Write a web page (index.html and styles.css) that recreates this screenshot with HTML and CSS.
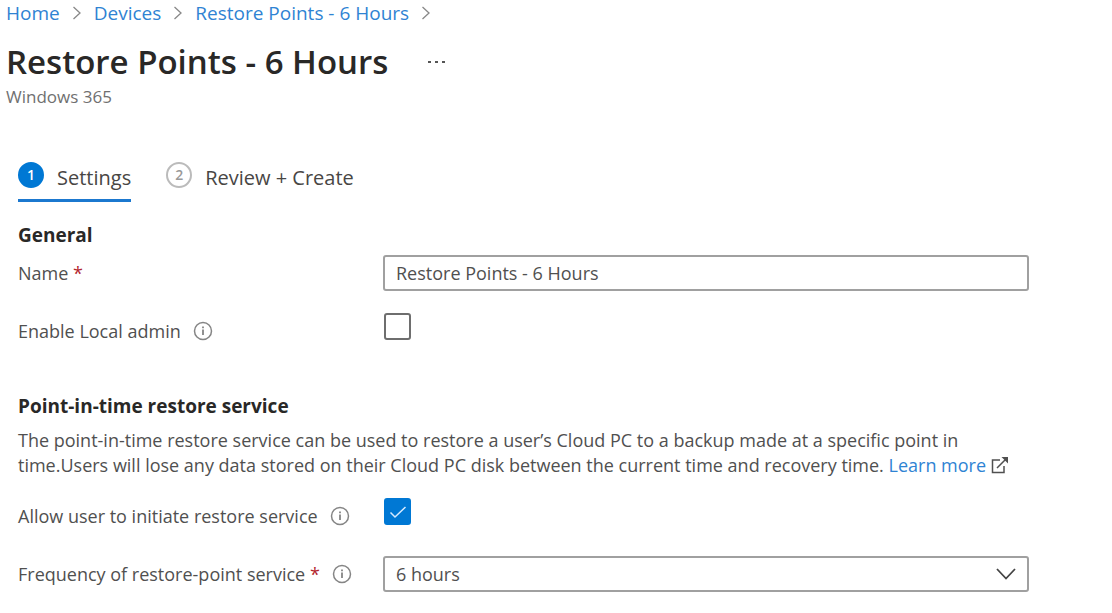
FILE: index.html
```html
<!DOCTYPE html>
<html lang="en">
<head>
<meta charset="utf-8">
<title>Restore Points - 6 Hours</title>
<link rel="stylesheet" href="styles.css">
</head>
<body>
<svg class="defs" aria-hidden="true">
  <symbol id="chevron" viewBox="0 0 10 16"><path d="M1.500 2l6.500 6-6.500 6" fill="none" stroke="currentColor" stroke-width="1.300"/></symbol>
  <symbol id="info" viewBox="0 0 20 20"><circle cx="10" cy="10" r="8.500" fill="none" stroke="currentColor" stroke-width="1.500"/><path d="M10 8.500v5.500M10 5.500v1.700" fill="none" stroke="currentColor" stroke-width="1.800"/></symbol>
</svg>
<header class="page-header">
  <nav class="breadcrumb" aria-label="Breadcrumb">
    <a class="link" href="#">Home</a>
    <svg class="crumb-sep"><use href="#chevron"/></svg>
    <a class="link" href="#">Devices</a>
    <svg class="crumb-sep"><use href="#chevron"/></svg>
    <a class="link" href="#">Restore Points - 6 Hours</a>
    <svg class="crumb-sep"><use href="#chevron"/></svg>
  </nav>
  <div class="title-row">
    <h1 class="title">Restore Points - 6 Hours</h1>
    <button class="more" type="button" aria-label="More actions"><svg class="more-icon" viewBox="0 0 18 4"><path d="M0 1h3v2H0zM7 1h3v2H7zM14 1h3v2h-3z" fill="currentColor"/></svg></button>
  </div>
  <p class="subtitle">Windows 365</p>
</header>
<main class="content">
  <div class="tabs" role="tablist">
    <button class="tab tab-active" type="button" role="tab" aria-selected="true"><span class="step step-active">1</span><span class="tab-text">Settings</span></button>
    <button class="tab" type="button" role="tab" aria-selected="false"><span class="step">2</span><span class="tab-text">Review + Create</span></button>
  </div>
  <form>
    <section class="section">
      <h2 class="heading">General</h2>
      <div class="fields">
        <div class="field">
          <div class="label-cell"><label for="name">Name <span class="required">*</span></label></div>
          <input class="control" id="name" type="text" value="Restore Points - 6 Hours">
        </div>
        <div class="field">
          <div class="label-cell"><label for="admin">Enable Local admin</label><svg class="info"><use href="#info"/></svg></div>
          <span class="check"><input class="box" id="admin" type="checkbox"></span>
        </div>
      </div>
    </section>
    <section class="section">
      <h2 class="heading">Point-in-time restore service</h2>
      <p class="description">The point-in-time restore service can be used to restore a user’s Cloud PC to a backup made at a specific point in time.Users will lose any data stored on their Cloud PC disk between the current time and recovery time. <a class="link" href="#">Learn more</a> <svg class="external" viewBox="0 0 18 18"><path d="M9 4H1.500v12.500H13V10M6 12l9.500-9.500" fill="none" stroke="currentColor" stroke-width="1.500"/><path d="M10.500 1H17v6.500z" fill="currentColor"/></svg></p>
      <div class="fields">
        <div class="field">
          <div class="label-cell"><label for="allow">Allow user to initiate restore service</label><svg class="info"><use href="#info"/></svg></div>
          <span class="check"><input class="box" id="allow" type="checkbox" checked><svg class="tick" viewBox="0 0 18 14"><path d="M1.500 7.500l4.500 4.500L16.500 2" fill="none" stroke="currentColor" stroke-width="1.500"/></svg></span>
        </div>
        <div class="field">
          <div class="label-cell"><label for="frequency">Frequency of restore-point service <span class="required">*</span></label><svg class="info"><use href="#info"/></svg></div>
          <div class="select-wrap">
            <select class="control" id="frequency"><option>6 hours</option></select>
            <svg class="arrow" viewBox="0 0 20 12"><path d="M1 1l9 9.500L19 1" fill="none" stroke="currentColor" stroke-width="1.800"/></svg>
          </div>
        </div>
      </div>
    </section>
  </form>
</main>
</body>
</html>
```
FILE: styles.css
```css
* { box-sizing: border-box; }
body {
  margin: 0;
  background: #fff;
  color: #505050;
  font: 18px/25px "Open Sans", "Noto Sans", sans-serif;
}
h1, h2, p { margin: 0; }
button, input, select { font: inherit; color: inherit; }
button { border: 0; padding: 0; background: none; }
.defs { display: none; }
.link { color: #2f83d3; text-decoration: none; }
.page-header { padding: 0 6px; }
.breadcrumb { display: flex; align-items: center; gap: 12px; height: 26px; font-size: 19px; }
.crumb-sep { width: 10px; height: 16px; color: #888; }
.title-row { display: flex; align-items: center; gap: 40px; margin-top: 14px; }
.title { font-size: 33px; line-height: 44px; font-weight: 600; color: #292827; }
.more { display: flex; color: #555; }
.more-icon { width: 18px; height: 4px; }
.subtitle { font-size: 17px; line-height: 26px; color: #707070; }
.content { padding: 50px 83px 20px 18px; }
.tabs { display: flex; gap: 35px; }
.tab { display: flex; gap: 13px; height: 42px; font-size: 20px; line-height: 36px; color: #484644; }
.tab-active { border-bottom: 3px solid #1b78cf; }
.step {
  width: 26px;
  height: 26px;
  margin-top: 2px;
  border: 2px solid #bbb;
  border-radius: 50%;
  font-size: 14px;
  line-height: 22px;
  font-weight: 600;
  color: #999;
}
.step-active { border-color: #0078d4; background: #0078d4; color: #fff; }
.section { padding-top: 20px; margin-bottom: 24px; }
.heading { font-size: 19px; line-height: 27px; font-weight: 700; color: #292827; }
.fields { display: grid; gap: 22px; padding-top: 6px; }
.field { display: grid; grid-template-columns: 365px 1fr; min-height: 36px; }
.label-cell { display: flex; align-items: center; gap: 12px; }
.required { color: #b3262d; }
.info { width: 20px; height: 20px; color: #858585; }
.control {
  width: 100%;
  height: 36px;
  padding: 0 11px;
  border: 2px solid #a0a0a0;
  border-radius: 3px;
  background: #fff;
  appearance: none;
}
.check { display: grid; justify-content: start; align-content: start; padding-left: 1px; }
.box {
  grid-area: 1 / 1;
  width: 27px;
  height: 27px;
  margin: 0;
  border: 2px solid #6e6e6e;
  border-radius: 3px;
  appearance: none;
}
.box:checked { border-color: #0078d4; background: #0078d4; }
.tick { grid-area: 1 / 1; place-self: center; width: 18px; height: 14px; color: #d5eaff; pointer-events: none; }
.description { margin-top: 8px; margin-bottom: 14px; }
.external { width: 18px; height: 18px; vertical-align: -2px; }
.select-wrap { display: grid; align-items: center; }
.select-wrap > * { grid-area: 1 / 1; }
.arrow { width: 20px; height: 12px; margin-right: 13px; justify-self: end; color: #444; pointer-events: none; }
```
